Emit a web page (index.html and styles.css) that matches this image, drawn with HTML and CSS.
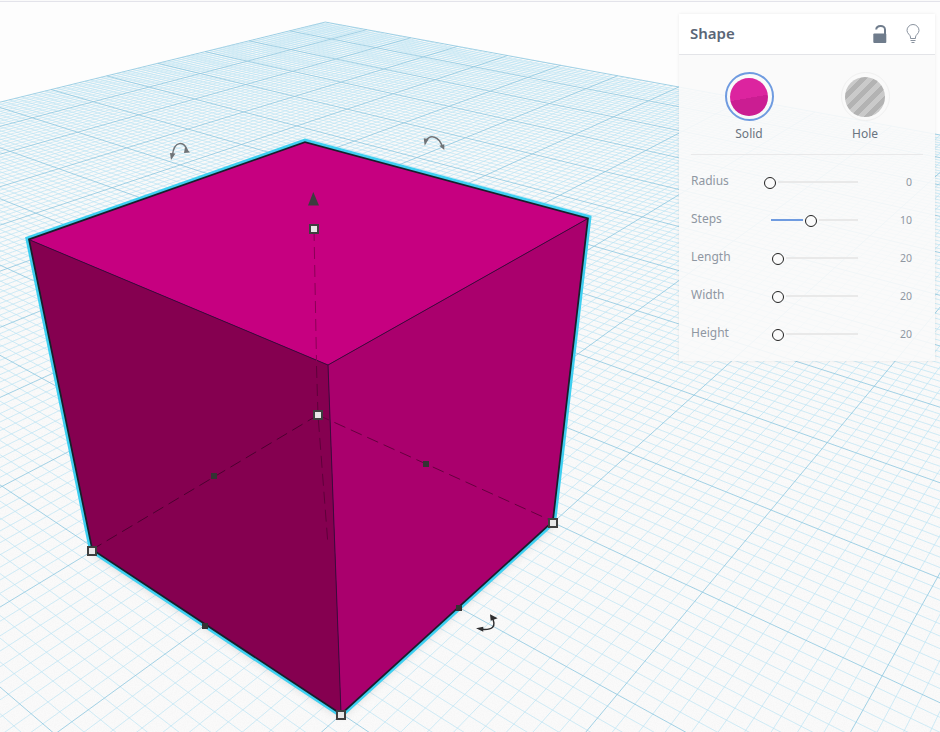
FILE: index.html
```html
<!DOCTYPE html>
<html lang="en">
<head>
<meta charset="utf-8">
<title>Shape</title>
<link rel="stylesheet" href="styles.css">
</head>
<body>
<div class="topline"></div>
<main class="stage">
  <svg class="scene" viewBox="0 2 940 730" width="940" height="730" xmlns="http://www.w3.org/2000/svg">
    <defs>
      <filter id="grain" x="0" y="0" width="100%" height="100%">
        <feTurbulence type="fractalNoise" baseFrequency="0.9" numOctaves="2" seed="4"/>
        <feColorMatrix type="matrix" values="0 0 0 0 0.93  0 0 0 0 0.93  0 0 0 0 0.93  0 0 0 -3 1.9"/>
      </filter>
      <filter id="soft"><feGaussianBlur stdDeviation="5"/></filter>
      <clipPath id="floorClip"><polygon id="floorClipShape" points="0,0 0,0 0,0"/></clipPath>
    </defs>
    <polygon id="floor" class="floor" points="0,0 0,0 0,0"/>
    <g clip-path="url(#floorClip)"><rect x="0" y="0" width="940" height="732" filter="url(#grain)"/></g>
    <g id="grid"></g>

    <polygon class="shadow" filter="url(#soft)" points="92,553 341,717 553,525 540,500 100,530"/>
    <polygon class="halo" points="30,240 305,143 587,219 552,521 341,713 93,549"/>
    <polygon class="rim" points="30,240 305,143 587,219 552,521 341,713 93,549"/>
    <polygon class="face-top" points="30,240 305,143 587,219 328,365"/>
    <polygon class="face-left" points="30,240 328,365 341,713 93,549"/>
    <polygon class="face-right" points="328,365 587,219 552,521 341,713"/>
    <path class="edge" d="M30 240 328 365 587 219M328 365 341 713"/>
    <path class="hidden-left" d="M318 415 93 549"/>
    <path class="hidden-right" d="M318 415 552 521"/>
    <path class="hidden-axis-top" d="M314 229 316.500 362"/>
    <path class="hidden-axis" d="M316.500 366 318 415 328 545"/>

    <path class="arrow-up" d="M313.300 192 308 205.500H319Z"/>
    <g class="rotate">
      <path class="rotate-arc" d="M172.500 155C174 141 184 140 187.500 151"/>
      <path class="rotate-head" d="M170 153 175.500 153.500 171 160ZM185 147 190 152.500 184 153Z"/>
    </g>
    <g class="rotate">
      <path class="rotate-arc" d="M426 141C430 134 439 136 442.500 147"/>
      <path class="rotate-head" d="M423.700 138.300 428.700 139 424.700 145.700ZM439.300 145.700 444.300 144.300 444.300 150Z"/>
    </g>
    <g class="rotate rotate-dark">
      <path class="rotate-arc" d="M482 629.300C492 630 497 627 492 617"/>
      <path class="rotate-head" d="M476 628.300 483.300 626.700 483.300 631.700ZM490 614.300 497.700 618.300 490.700 620.700Z"/>
    </g>

    <rect class="grip" x="202" y="623" width="6" height="6"/>
    <rect class="grip" x="456" y="605" width="6" height="6"/>
    <rect class="grip" x="211" y="473" width="6" height="6"/>
    <rect class="grip" x="423" y="461" width="6" height="6"/>

    <rect class="corner" x="310" y="225" width="8" height="8"/>
    <rect class="corner" x="314" y="411" width="8" height="8"/>
    <rect class="corner" x="88" y="547" width="8" height="8"/>
    <rect class="corner" x="549" y="519" width="8" height="8"/>
    <rect class="corner" x="337" y="711" width="8" height="8"/>
  </svg>

  <aside class="panel">
    <header class="panel-head">
      <h2 class="panel-title">Shape</h2>
      <div class="panel-tools">
        <svg class="tool" width="16" height="20" viewBox="0 0 16 20" xmlns="http://www.w3.org/2000/svg">
          <path class="lock-shackle" d="M4.200 5.500C4.500 1.200 12.800 0.500 13 5.500V11"/>
          <rect class="lock-body" x="1.300" y="9.500" width="13" height="9.500" rx="1"/>
        </svg>
        <svg class="tool" width="16" height="20" viewBox="0 0 16 20" xmlns="http://www.w3.org/2000/svg">
          <path class="bulb" d="M5.500 14.500V13C5.500 11 2 9.500 2 6.500A6 6 0 0 1 14 6.500C14 9.500 10.500 11 10.500 13V14.500Z"/>
          <path class="bulb-base" d="M5.500 16.500H10.500M6.500 18.500H9.500"/>
        </svg>
      </div>
    </header>

    <div class="modes">
      <div class="mode">
        <span class="swatch swatch-active"><span class="fill fill-solid"></span></span>
        <span class="mode-label">Solid</span>
      </div>
      <div class="mode">
        <span class="swatch"><span class="fill fill-hole"></span></span>
        <span class="mode-label">Hole</span>
      </div>
    </div>

    <div class="params">
      <div class="param">
        <span class="param-name">Radius</span>
        <div class="slider"><span class="lead"></span><span class="knob"></span><span class="rest"></span></div>
        <span class="param-value">0</span>
      </div>
      <div class="param">
        <span class="param-name">Steps</span>
        <div class="slider"><span class="lead lead-on" style="width:32px"></span><span class="knob"></span><span class="rest"></span></div>
        <span class="param-value">10</span>
      </div>
      <div class="param">
        <span class="param-name">Length</span>
        <div class="slider"><span class="lead" style="width:8px"></span><span class="knob"></span><span class="rest"></span></div>
        <span class="param-value">20</span>
      </div>
      <div class="param">
        <span class="param-name">Width</span>
        <div class="slider"><span class="lead" style="width:8px"></span><span class="knob"></span><span class="rest"></span></div>
        <span class="param-value">20</span>
      </div>
      <div class="param">
        <span class="param-name">Height</span>
        <div class="slider"><span class="lead" style="width:8px"></span><span class="knob"></span><span class="rest"></span></div>
        <span class="param-value">20</span>
      </div>
    </div>
  </aside>
</main>
<script src="grid.js"></script>
</body>
</html>
```
FILE: styles.css
```css
html, body {
  margin: 0;
  padding: 0;
  height: 732px;
  overflow: hidden;
  background: #fdfdfd;
  font-family: "Noto Sans", "Open Sans", sans-serif;
}
.topline {
  height: 2px;
  box-sizing: border-box;
  border-bottom: 1px solid #e3e3ea;
  background: #fafafa;
}
.stage {
  position: relative;
  height: 730px;
  overflow: hidden;
}
.scene {
  position: absolute;
  inset: 0;
  display: block;
}

/* floor */
.floor { fill: #fafafa; }
.minor { stroke: #bce4f3; stroke-width: 0.7; fill: none; }
.major { stroke: #8cc6df; stroke-width: 0.8; fill: none; }

/* cube */
.shadow { fill: #000; opacity: 0.13; }
.halo { fill: #000; stroke: #3ecff0; stroke-width: 8.500; stroke-linejoin: miter; }
.rim { fill: #000; stroke: #17202b; stroke-width: 3.500; stroke-linejoin: miter; }
.face-top { fill: #c60080; }
.face-left { fill: #850050; }
.face-right { fill: #aa006d; }
.edge { fill: none; stroke: #3d0a3e; stroke-width: 1; }
.hidden-left, .hidden-right, .hidden-axis, .hidden-axis-top { fill: none; stroke-width: 1; stroke-dasharray: 12 6; }
.hidden-left { stroke: #4d0030; }
.hidden-right { stroke: #66003f; }
.hidden-axis { stroke: #5e003a; }
.hidden-axis-top { stroke: #8a0056; }

/* handles */
.arrow-up { fill: #3c3c3e; }
.grip { fill: #333; }
.corner { fill: #e8e8e8; stroke: #3f3f3f; stroke-width: 2; }
.rotate-arc { fill: none; stroke: #6f7377; stroke-width: 1.5; }
.rotate-head { fill: #6f7377; }
.rotate-dark .rotate-arc { stroke: #2e2e30; }
.rotate-dark .rotate-head { fill: #2e2e30; }

/* panel */
.panel {
  position: absolute;
  left: 679px;
  top: 12px;
  width: 256px;
  height: 347px;
  display: flex;
  flex-direction: column;
  background: rgba(250, 250, 250, 0.9);
  box-shadow: 0 0 3px rgba(0, 0, 0, 0.08);
}
.panel-head {
  height: 41px;
  box-sizing: border-box;
  display: flex;
  align-items: center;
  justify-content: space-between;
  padding: 0 14px 0 11px;
  background: #fff;
  border-bottom: 1px solid #e3e4e8;
}
.panel-title {
  margin: 0;
  padding-bottom: 2px;
  font-size: 15px;
  font-weight: 600;
  color: #5a6676;
}
.panel-tools { display: flex; gap: 17px; }
.tool { display: block; }
.lock-body { fill: #6f7c8c; }
.lock-shackle { fill: none; stroke: #6f7c8c; stroke-width: 2; }
.bulb { fill: none; stroke: #8a939f; stroke-width: 1; }
.bulb-base { fill: none; stroke: #8a939f; stroke-width: 1; }

.modes {
  margin: 0 12px;
  padding: 17px 0 12px;
  display: grid;
  grid-template-columns: 116px 116px;
  border-bottom: 1px solid #e9e9ea;
}
.mode {
  display: flex;
  flex-direction: column;
  align-items: center;
  gap: 5px;
}
.swatch {
  width: 49px;
  height: 49px;
  box-sizing: border-box;
  border: 1.500px solid #f0f0f0;
  border-radius: 50%;
  display: flex;
  align-items: center;
  justify-content: center;
}
.swatch-active { border: 2px solid #6f9be0; }
.fill {
  display: block;
  width: 40px;
  height: 40px;
  border-radius: 50%;
}
.fill-solid {
  width: 38px;
  height: 38px;
  background: linear-gradient(170deg, #dc249f 52%, #cb1d92 52%);
}
.fill-hole {
  background: repeating-linear-gradient(-45deg, #b3b3b3 0 5px, #cacaca 5px 10px);
}
.mode-label {
  font-size: 12px;
  line-height: 16px;
  color: #6a7480;
}

.params {
  padding-top: 8px;
  margin-left: 12px;
}
.param {
  height: 38px;
  width: 221px;
  display: flex;
  align-items: center;
}
.param-name {
  width: 73px;
  padding-bottom: 4px;
  font-size: 12px;
  color: #8f97a2;
}
.slider {
  width: 94px;
  display: flex;
  align-items: center;
}
.lead { display: block; height: 2px; flex: none; }
.lead-on {
  margin: 0 2px 0 7px;
  background: #6f9be0;
}
.knob {
  flex: none;
  width: 12px;
  height: 12px;
  box-sizing: border-box;
  margin: 2px 2px 0 0;
  background: #fbfbfb;
  border: 1px solid #222;
  border-radius: 50%;
}
.rest {
  display: block;
  flex: 1;
  height: 2px;
  background: #e9e9e9;
}
.param-value {
  flex: 1;
  text-align: right;
  font-size: 10.500px;
  color: #8f97a2;
}
```
FILE: grid.js
```js
// Workplane drawn in perspective: grid coordinates are projected through two vanishing points.
(function () {
  var NS = "http://www.w3.org/2000/svg";
  var O = [771, 510], VA = [1398, -242], VB = [-1074, -235];
  var B = 0.0985, C = 0.0828;
  var U_MIN = -12, V_MAX = 8.94, U_MAX = 8, V_MIN = -11.06;
  var EPS = 0.06;

  function depth(u, v) { return 1 + v * B - u * C; }
  function project(u, v) {
    var d = depth(u, v);
    return [
      (O[0] + v * B * VA[0] - u * C * VB[0]) / d,
      (O[1] + v * B * VA[1] - u * C * VB[1]) / d
    ];
  }
  function fmt(p) { return p[0].toFixed(2) + " " + p[1].toFixed(2); }

  var minor = "", major = "";
  function add(isMajor, a, b) {
    var s = "M" + fmt(a) + "L" + fmt(b);
    if (isMajor) major += s; else minor += s;
  }

  var i, u, v, low, high;
  for (i = U_MIN * 10; i <= U_MAX * 10; i++) {
    u = i / 10;
    low = Math.max(V_MIN, (EPS - 1 + u * C) / B);
    if (low < V_MAX) add(i % 10 === 0, project(u, low), project(u, V_MAX));
  }
  for (i = -110; i <= 89; i++) {
    v = i / 10;
    if (i === 89) v = V_MAX;
    high = Math.min(U_MAX, (1 + v * B - EPS) / C);
    if (high > U_MIN) add(i % 10 === 0 || i === 89, project(U_MIN, v), project(high, v));
  }

  var grid = document.getElementById("grid");
  [["minor", minor], ["major", major]].forEach(function (part) {
    var path = document.createElementNS(NS, "path");
    path.setAttribute("class", part[0]);
    path.setAttribute("d", part[1]);
    grid.appendChild(path);
  });

  var corners = [project(U_MIN, V_MAX), project(U_MAX, V_MAX), project(U_MAX, (EPS - 1 + U_MAX * C) / B), project(U_MIN, V_MIN)];
  var pts = corners.map(function (p) { return p[0].toFixed(1) + "," + p[1].toFixed(1); }).join(" ");
  document.getElementById("floor").setAttribute("points", pts);
  document.getElementById("floorClipShape").setAttribute("points", pts);
})();
```
